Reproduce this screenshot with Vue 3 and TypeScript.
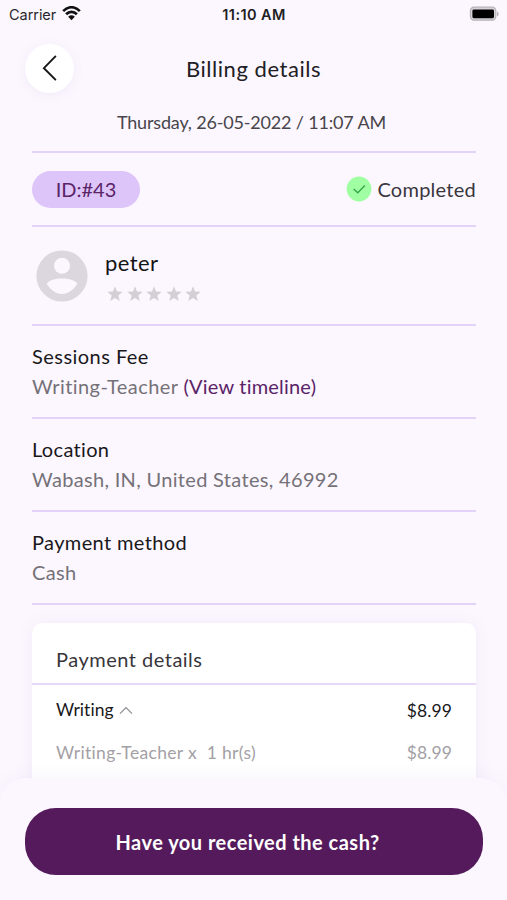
<script setup lang="ts">
interface Section {
  title: string
  value: string
  link?: string
  name: string
}

const sections: Section[] = [
  { name: 'fee', title: 'Sessions Fee', value: 'Writing-Teacher', link: '(View timeline)' },
  { name: 'location', title: 'Location', value: 'Wabash, IN, United States, 46992' },
  { name: 'method', title: 'Payment method', value: 'Cash' },
]
</script>

<template>
  <div class="screen">
    <div class="status">
      <div class="carrier">
        <span>Carrier</span>
        <svg class="wifi" width="19" height="15" viewBox="0 0 19 15">
          <path d="M1.2 5.2C6-.1 13-.1 17.8 5.2" />
          <path d="M4.1 8.3c3.2-3.3 7.6-3.3 10.8 0" />
          <path class="dot" d="M6.2 10.7c1.9-1.8 4.7-1.8 6.6 0L9.5 14.2Z" />
        </svg>
      </div>
      <span class="clock">11:10 AM</span>
      <svg class="battery" width="31" height="16" viewBox="0 0 31 16">
        <rect class="case" x="1.4" y="1.2" width="25.4" height="13" rx="3.6" />
        <rect x="3.4" y="3.4" width="21.6" height="8.8" rx="1.4" />
        <path class="cap" d="M28 5.4c2.2.7 2.2 4.2 0 4.9Z" />
      </svg>
    </div>

    <header class="header">
      <button class="back" aria-label="Back">
        <svg width="49" height="49" viewBox="0 0 49 49"><path d="M30.4 12.4 18.9 24.2 30.4 35.6" /></svg>
      </button>
      <h1>Billing details</h1>
    </header>

    <main class="content">
      <div class="date"><span>Thursday, 26-05-2022 / 11:07 AM</span></div>

      <div class="summary">
        <span class="id">ID:#43</span>
        <span class="state">
          <svg width="26" height="26" viewBox="0 0 26 26">
            <circle cx="13" cy="13" r="12.4" />
            <path d="m7.6 13 4.2 3.8 7-7.2" />
          </svg>
          <span>Completed</span>
        </span>
      </div>

      <div class="person">
        <svg class="avatar" width="52" height="52" viewBox="0 0 52 52">
          <circle class="disc" cx="26" cy="26" r="25.6" />
          <circle cx="26" cy="15.8" r="8" />
          <path d="M10.6 33.6C13.4 29.9 19.2 28.4 26 28.4S38.6 29.9 41.4 33.6C37.7 40 32.3 44 26 44S14.3 40 10.6 33.6Z" />
        </svg>
        <div>
          <div class="name">peter</div>
          <div class="stars">
            <svg v-for="n in 5" :key="n" width="16" height="16" viewBox="0 0 16 16">
              <path d="m8 .3 2 5.2 5.7.3-4.4 3.6 1.5 5.7L8 12l-4.8 3.1 1.5-5.7L.3 5.8 6 5.5Z" />
            </svg>
          </div>
        </div>
      </div>

      <section v-for="s in sections" :key="s.name" class="info" :class="s.name">
        <h2>{{ s.title }}</h2>
        <p><span>{{ s.value }}</span><a v-if="s.link">{{ s.link }}</a></p>
      </section>

      <div class="card">
        <h3>Payment details</h3>
        <div class="row">
          <span class="subject">
            <span>Writing</span>
            <svg width="14" height="9" viewBox="0 0 14 9"><path d="M1 7.7 7 1.5l6 6.2" /></svg>
          </span>
          <span class="price">$8.99</span>
        </div>
        <div class="row muted">
          <span class="line">Writing-Teacher x&nbsp; 1 hr(s)</span>
          <span class="price">$8.99</span>
        </div>
      </div>
    </main>

    <footer class="footer">
      <button class="confirm">Have you received the cash?</button>
    </footer>
  </div>
</template>

<style>
body {
  margin: 0;
  background: #fcf7fe;
}
</style>

<style scoped>
* {
  box-sizing: border-box;
}
.screen {
  display: flex;
  flex-direction: column;
  width: 507px;
  height: 900px;
  overflow: hidden;
  background: #fcf7fe;
  color: #202024;
  font-family: Lato, "Open Sans", sans-serif;
  font-variant-ligatures: none;
}
h1, h2, h3, p {
  margin: 0;
  font-weight: 400;
}
button {
  border: 0;
  padding: 0;
  font-family: inherit;
}
.status {
  display: grid;
  grid-template-columns: 1fr auto 1fr;
  align-items: center;
  flex: none;
  height: 28px;
  padding: 0 7px 0 9px;
  font-family: Inter, sans-serif;
  font-size: 14.5px;
}
.carrier {
  display: flex;
  align-items: center;
  gap: 6px;
  color: #29272c;
  letter-spacing: -0.05px;
}
.wifi {
  margin-top: -2px;
  fill: none;
  stroke: #111;
  stroke-width: 2.7;
}
.wifi .dot {
  fill: #111;
  stroke: none;
}
.clock {
  margin-right: 1px;
  font-weight: 600;
  letter-spacing: 0.4px;
}
.battery {
  justify-self: end;
  margin-top: -1px;
  fill: #000;
}
.battery .case {
  fill: #d6d2d8;
  stroke: #b5b2b8;
  stroke-width: 1.2;
}
.battery .cap {
  fill: #b5b2b8;
}
.header {
  display: grid;
  grid-template-columns: 50px 1fr 50px;
  align-items: center;
  flex: none;
  height: 81px;
  padding: 0 25px;
}
.back {
  width: 49px;
  height: 49px;
  border-radius: 50%;
  background: #fff;
  box-shadow: 0 2px 12px rgba(110, 90, 190, 0.08);
}
.back svg {
  display: block;
  fill: none;
  stroke: #151515;
  stroke-width: 1.9;
  stroke-linecap: round;
}
h1 {
  text-align: center;
  font-size: 22px;
  line-height: 28px;
  letter-spacing: 0.55px;
}
.content {
  flex: 1;
  min-height: 0;
  padding: 0 31px 0 32px;
}
.date {
  height: 44px;
  padding: 1px 5px 0 0;
  border-bottom: 2px solid #e3d3f9;
  color: #48454b;
  text-align: center;
  font-size: 18px;
  line-height: 24px;
  letter-spacing: -0.17px;
}
.summary {
  display: flex;
  align-items: center;
  justify-content: space-between;
  height: 74px;
  border-bottom: 2px solid #e3d3f9;
  font-size: 20px;
}
.id {
  width: 108px;
  height: 37px;
  border-radius: 19px;
  background: #ddc5f9;
  color: #5b2468;
  text-align: center;
  line-height: 36px;
}
.state {
  display: flex;
  align-items: center;
  gap: 5px;
  color: #39363d;
  letter-spacing: 0.26px;
}
.state span {
  padding-bottom: 1px;
}
.state circle {
  fill: #a0ffa3;
}
.state path {
  fill: none;
  stroke: #35a84a;
  stroke-width: 1.4;
}
.person {
  display: flex;
  gap: 17px;
  height: 99px;
  padding: 23px 0 0 4px;
  border-bottom: 2px solid #e3d3f9;
}
.avatar {
  fill: #fcf7fe;
}
.avatar .disc {
  fill: #dcd7df;
}
.name {
  color: #141416;
  font-size: 22px;
  line-height: 26px;
  letter-spacing: 0.4px;
}
.stars {
  display: flex;
  gap: 3.5px;
  margin: 10px 0 0 2px;
  fill: #d3cfd5;
}
.info {
  height: 93px;
  padding-top: 15px;
  border-bottom: 2px solid #e3d3f9;
  font-size: 20px;
}
.info h2 {
  color: #19181b;
  font-size: 20px;
  line-height: 31px;
  letter-spacing: 0.46px;
}
.location h2 {
  letter-spacing: 0.32px;
}
.method h2 {
  letter-spacing: 0.37px;
}
.info p {
  color: #757178;
  line-height: 29px;
  letter-spacing: 0.32px;
}
.fee p {
  letter-spacing: 0.42px;
}
.info a {
  margin-left: 5px;
  color: #5b2468;
  letter-spacing: 0.2px;
}
.card {
  height: 240px;
  margin-top: 18px;
  border-radius: 10px;
  background: #fff;
  box-shadow: 0 0 16px rgba(110, 90, 190, 0.08);
}
h3 {
  height: 62px;
  padding: 20px 24px 0;
  border-bottom: 2px solid #e8d8fb;
  color: #38353b;
  font-size: 20px;
  line-height: 32px;
  letter-spacing: 0.5px;
}
.row {
  display: flex;
  justify-content: space-between;
  height: 43px;
  padding: 9px 24px 0;
  color: #19181b;
  font-size: 17.5px;
  line-height: 32px;
}
.row:not(.muted) .price {
  padding-top: 1px;
}
.price {
  letter-spacing: 0.1px;
}
.subject {
  display: flex;
  align-items: center;
  gap: 5px;
  height: 32px;
  letter-spacing: 0.05px;
}
.subject svg {
  fill: none;
  stroke: #8c898f;
  stroke-width: 1.1;
}
.line {
  letter-spacing: 0.33px;
}
.row.muted {
  color: #a3a0a5;
}
.footer {
  position: relative;
  flex: none;
  height: 122px;
  padding: 30px 24px 0 25px;
  border-radius: 26px 26px 0 0;
  background: #fcf7fe;
  box-shadow: 0 -3px 16px rgba(110, 90, 190, 0.05);
}
.confirm {
  display: block;
  width: 100%;
  height: 67px;
  padding-right: 13px;
  border-radius: 31px;
  background: #541a5c;
  color: #fff;
  font-size: 20px;
  font-weight: 700;
  letter-spacing: 0.48px;
}
</style>
